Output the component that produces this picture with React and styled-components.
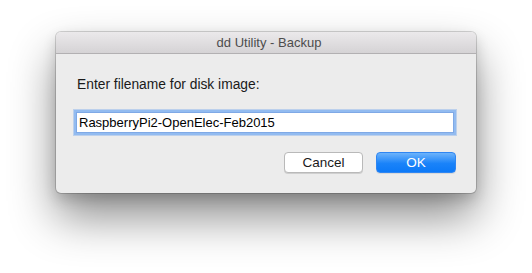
import React from "react";
import styled, { createGlobalStyle } from "styled-components";

const Global = createGlobalStyle`
  html, body { margin: 0; padding: 0; background: #ffffff; }
  body { font-family: "Liberation Sans", Arial, sans-serif; -webkit-font-smoothing: antialiased; }
`;

const Stage = styled.div`
  width: 532px;
  height: 273px;
  padding: 32px 56px 0 56px;
  box-sizing: border-box;
  background: #ffffff;
`;

const Window = styled.div`
  width: 420px;
  height: 161px;
  box-sizing: border-box;
  display: flex;
  flex-direction: column;
  background: #ececec;
  border-radius: 5px;
  overflow: hidden;
  box-shadow: 0 0 0 1px rgba(0, 0, 0, 0.16), 0 24px 46px rgba(0, 0, 0, 0.45),
    0 6px 14px rgba(0, 0, 0, 0.16);
`;

const TitleBar = styled.div`
  height: 21px;
  flex: none;
  display: flex;
  align-items: center;
  justify-content: center;
  background: linear-gradient(#ebe9eb, #d5d3d5);
  border-bottom: 1px solid #b2b0b2;
  color: #4d4d4d;
  font-size: 13px;
  line-height: 16px;
  padding-left: 6px;
`;

const Body = styled.div`
  flex: 1;
  display: flex;
  flex-direction: column;
  padding: 23px 20px 20px 20px;
`;

const Label = styled.div`
  font-size: 13.8px;
  line-height: 16px;
  color: #1a1a1a;
  padding-left: 1px;
`;

const Field = styled.input`
  margin-top: 19px;
  width: 378px;
  height: 21px;
  box-sizing: border-box;
  border: 1px solid #7fa9e6;
  border-radius: 0;
  background: #ffffff;
  outline: none;
  box-shadow: 0 0 0 2px #92bbf0, 0 0 0 3px rgba(140, 180, 235, 0.5);
  padding: 0 0 0 2px;
  font-family: "Liberation Sans", Arial, sans-serif;
  font-size: 13px;
  color: #000000;
`;

const Buttons = styled.div`
  margin-top: 19px;
  display: flex;
  justify-content: flex-end;
  gap: 13px;
`;

const Button = styled.button`
  width: ${(p) => (p.$primary ? "80px" : "79px")};
  height: 21px;
  box-sizing: border-box;
  border-radius: 4px;
  padding: 0;
  font-family: "Liberation Sans", Arial, sans-serif;
  font-size: 13.5px;
  line-height: 19px;
  color: ${(p) => (p.$primary ? "#ffffff" : "#1a1a1a")};
  background: ${(p) =>
    p.$primary ? "linear-gradient(#6db3fb, #1a83f9 55%, #0c79f7)" : "#ffffff"};
  border: 1px solid ${(p) => (p.$primary ? "#2f86f2" : "#b9b9b9")};
  box-shadow: ${(p) =>
    p.$primary ? "0 1px 0 rgba(0,0,0,0.08)" : "0 1px 0 rgba(0,0,0,0.12)"};
`;

export default function App() {
  return (
    <>
      <Global />
      <Stage>
        <Window>
          <TitleBar>dd Utility - Backup</TitleBar>
          <Body>
            <Label>Enter filename for disk image:</Label>
            <Field defaultValue="RaspberryPi2-OpenElec-Feb2015" readOnly />
            <Buttons>
              <Button>Cancel</Button>
              <Button $primary>OK</Button>
            </Buttons>
          </Body>
        </Window>
      </Stage>
    </>
  );
}
